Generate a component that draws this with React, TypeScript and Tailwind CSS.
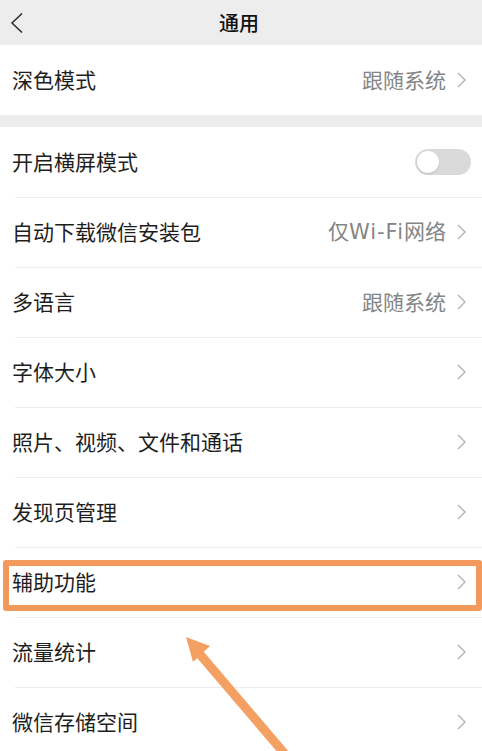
const font = { fontFamily: '"Noto Sans CJK SC", "Noto Sans", sans-serif' };

type Row = { label: string; value?: React.ReactNode; toggle?: boolean; highlight?: boolean };

const wifi = (
  <>
    仅<span className="tracking-[1px]" style={{ fontFamily: '"DejaVu Sans", sans-serif' }}>Wi-Fi</span>网络
  </>
);

const rows: Row[] = [
  { label: "开启横屏模式", toggle: true },
  { label: "自动下载微信安装包", value: wifi },
  { label: "多语言", value: "跟随系统" },
  { label: "字体大小" },
  { label: "照片、视频、文件和通话" },
  { label: "发现页管理" },
  { label: "辅助功能", highlight: true },
  { label: "流量统计" },
  { label: "微信存储空间" },
];

const Chevron = () => (
  <svg width="11" height="18" viewBox="0 0 11 18" className="shrink-0">
    <path d="M2 2 L9 9 L2 16" fill="none" stroke="#b3b3b3" strokeWidth="1.4" />
  </svg>
);

const BackIcon = () => (
  <svg width="16" height="22" viewBox="0 0 16 22" className="ml-[9px]">
    <path d="M13 1.5 L3 11 L13 20.5" fill="none" stroke="#2a2a2a" strokeWidth="1.5" />
  </svg>
);

const Toggle = () => (
  <div className="w-[56px] h-[26px] rounded-full bg-[#dadada] p-[2px] mr-[-4px]">
    <div className="w-[22px] h-[22px] rounded-full bg-white shadow-[0_1px_2px_rgba(0,0,0,0.15)]" />
  </div>
);

const SettingRow = ({ row, first }: { row: Row; first?: boolean }) => (
  <div className="relative h-[70px] bg-white">
    {!first && <div className="absolute top-0 left-[15px] right-0 h-px bg-[#ececec]" />}
    <div className="flex h-full items-center justify-between pl-3 pr-[15px]">
      <span className="text-[21px] text-[#1e1e1e]">{row.label}</span>
      {row.toggle ? (
        <Toggle />
      ) : (
        <div className="flex items-center gap-[10px]">
          {row.value && <span className="text-[21px] text-[#858585]">{row.value}</span>}
          <Chevron />
        </div>
      )}
    </div>
    {row.highlight && (
      <div className="absolute top-[13px] left-[3px] right-[0px] h-[51px] border-[6px] border-[#f29a5c] rounded-[3px]" />
    )}
  </div>
);

export default function App() {
  return (
    <div className="relative w-[482px] h-[751px] overflow-hidden bg-[#ededed]" style={font}>
      <div className="grid grid-cols-[40px_1fr_40px] items-center h-[45px] bg-[#ededed]">
        <BackIcon />
        <span className="text-center text-[20px] font-medium text-[#111] mr-[4px]">通用</span>
        <span />
      </div>
      <div className="h-[70px] bg-white flex items-center justify-between pl-3 pr-[15px]">
        <span className="text-[21px] text-[#1e1e1e]">深色模式</span>
        <div className="flex items-center gap-[10px]">
          <span className="text-[21px] text-[#858585]">跟随系统</span>
          <Chevron />
        </div>
      </div>
      <div className="h-[12px]" />
      {rows.map((r, i) => (
        <SettingRow key={r.label} row={r} first={i === 0} />
      ))}
      <svg className="absolute left-0 top-0 pointer-events-none" width="482" height="751">
        <line x1="198" y1="652" x2="290" y2="760" stroke="#f4a062" strokeWidth="9" />
        <polygon points="186,637 210,646 193,662" fill="#f4a062" />
      </svg>
    </div>
  );
}
